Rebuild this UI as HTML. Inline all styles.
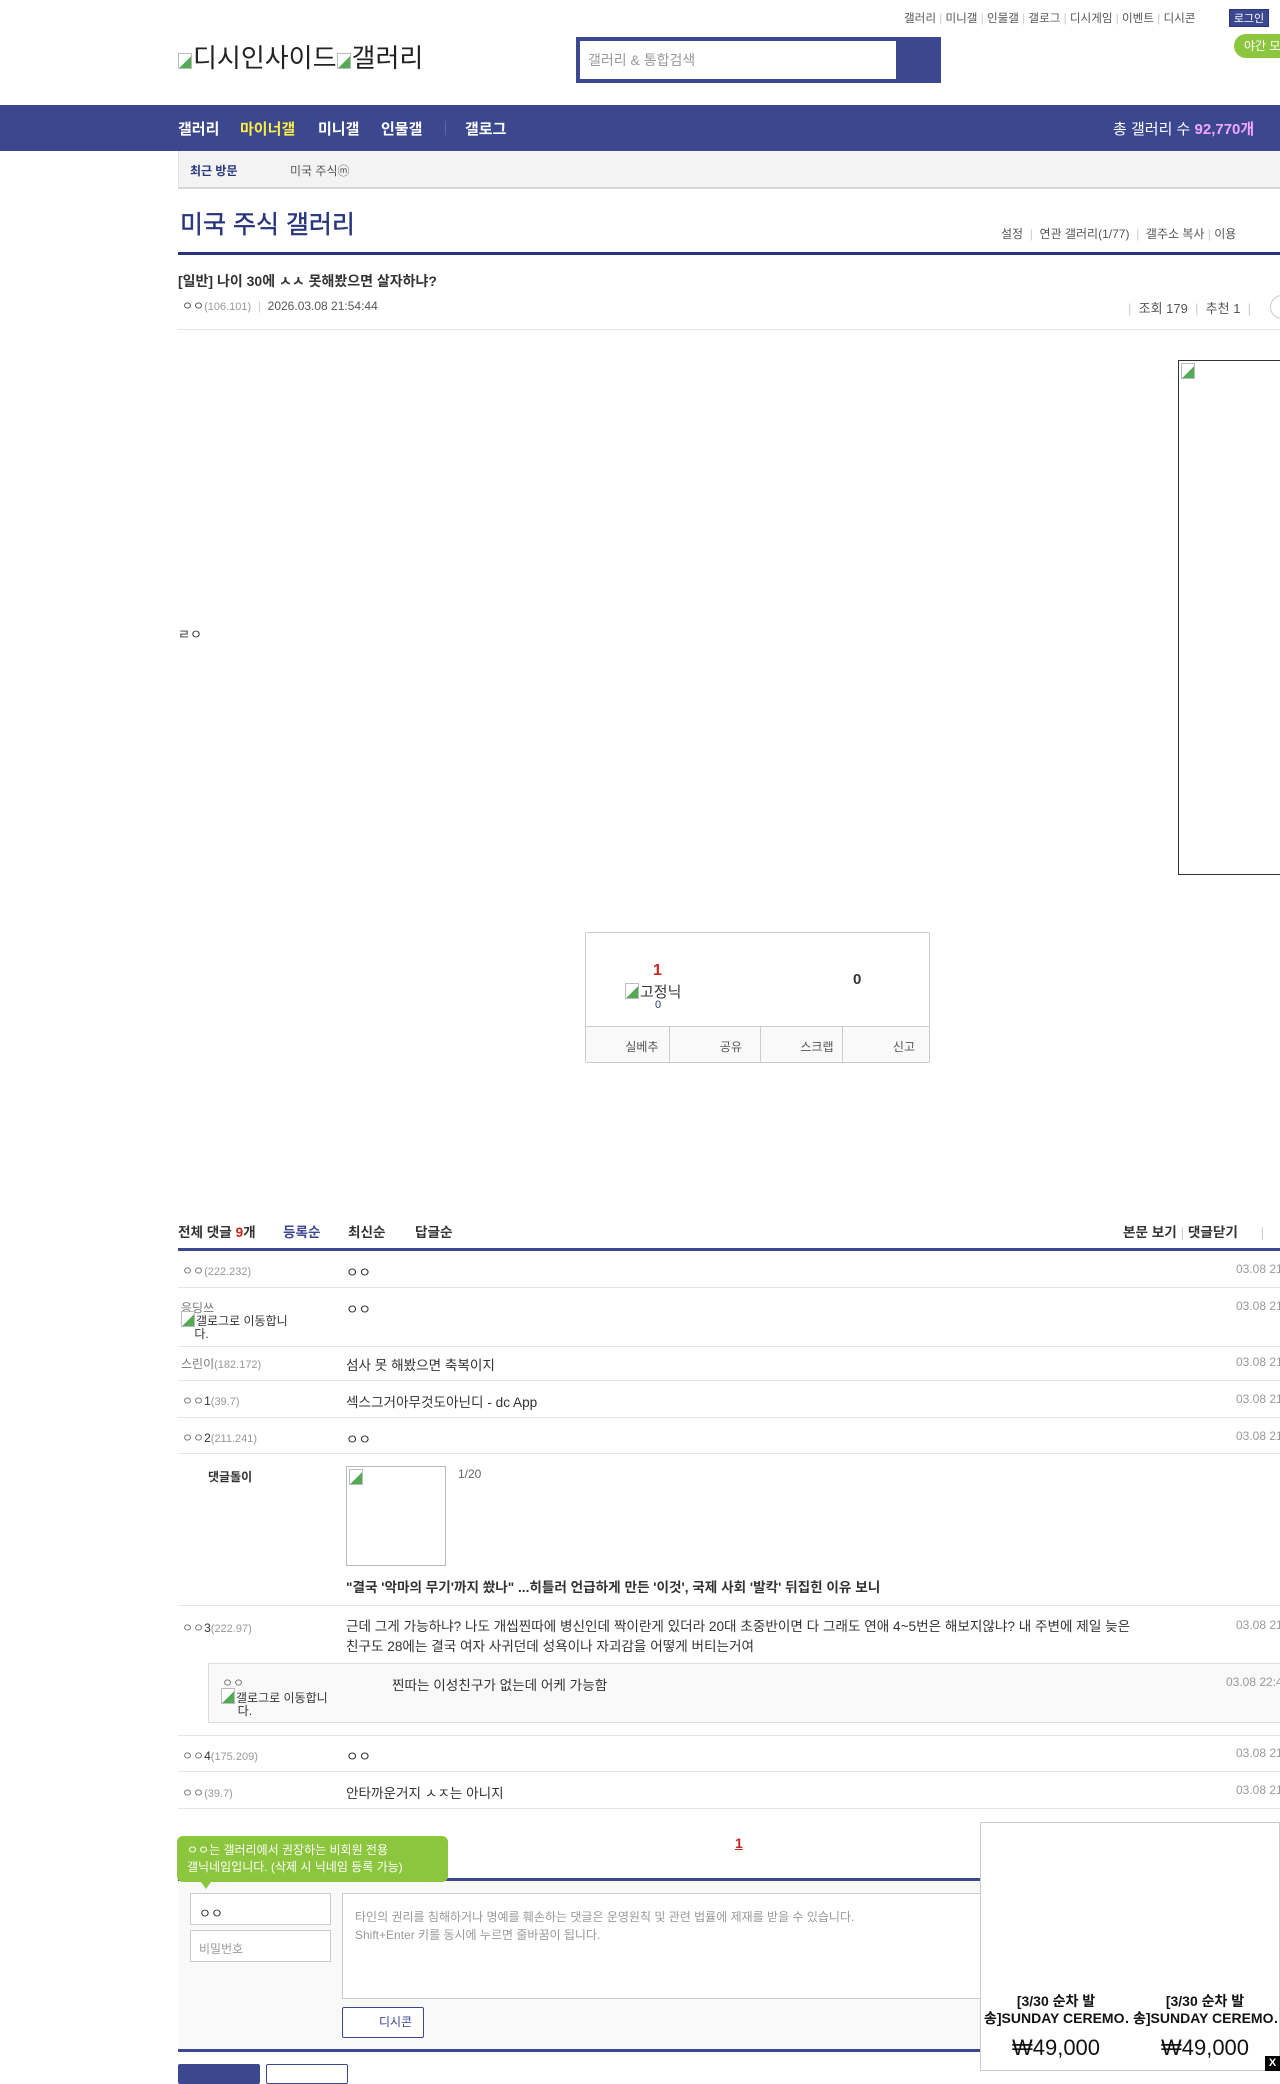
<!DOCTYPE html>
<html><head><meta charset="utf-8"><style>
*{margin:0;padding:0;box-sizing:border-box}
body{width:1280px;height:2071px;position:relative;overflow:hidden;background:#fff;font-family:"Liberation Sans","Noto Sans CJK KR",sans-serif;font-size:13px;color:#333}
.a{position:absolute;white-space:nowrap}
.line{position:absolute;height:1px;background:#e5e5e5;left:178px;right:0}
.nick{color:#777;font-size:12px}
.ip{color:#999;font-size:11px}
.dt{color:#999;font-size:12px;left:1236px}
.ct{font-size:13.6px}
.broken{display:inline-block;width:14px;height:16px;border:1px solid #bbb;background:linear-gradient(135deg,#fff 55%,#5a5 55%);vertical-align:-2px;margin-right:1px}
</style></head><body>
<div class="a" style="top:10px;left:904px;font-size:11.6px;color:#555">갤러리 <span style="color:#ccc">|</span> 미니갤 <span style="color:#ccc">|</span> 인물갤 <span style="color:#ccc">|</span> 갤로그 <span style="color:#ccc">|</span> 디시게임 <span style="color:#ccc">|</span> 이벤트 <span style="color:#ccc">|</span> 디시콘</div>
<div class="a" style="top:9px;left:1229px;width:40px;height:18px;background:#3b4890;color:#fff;font-size:11px;text-align:center;line-height:18px;border:1px solid #29367c">로그인</div>
<div class="a" style="top:34px;left:1234px;width:60px;height:24px;background:#8cc63e;border-radius:12px;color:#fff;font-size:12px;line-height:24px;padding-left:10px">야간 모드</div>
<div class="a" style="top:38px;left:178px;font-size:26px;color:#222"><span class="broken"></span>디시인사이드<span class="broken"></span>갤러리</div>
<div class="a" style="top:37px;left:576px;width:365px;height:46px;background:#3b4890"></div>
<div class="a" style="top:41px;left:580px;width:316px;height:38px;background:#fff;color:#999;font-size:14px;line-height:38px;padding-left:8px">갤러리 &amp; 통합검색</div>
<div class="a" style="top:105px;left:0;width:1280px;height:46px;background:#3b4890"></div>
<div class="a" style="top:118px;left:178px;color:#fff;font-size:15px;font-weight:bold">갤러리</div>
<div class="a" style="top:118px;left:240px;color:#ffed45;font-size:15px;font-weight:bold">마이너갤</div>
<div class="a" style="top:118px;left:318px;color:#fff;font-size:15px;font-weight:bold">미니갤</div>
<div class="a" style="top:118px;left:381px;color:#fff;font-size:15px;font-weight:bold">인물갤</div>
<div class="a" style="top:121px;left:445px;width:1px;height:14px;background:#5a66a6"></div>
<div class="a" style="top:118px;left:465px;color:#fff;font-size:15px;font-weight:bold">갤로그</div>
<div class="a" style="top:118px;left:1113px;color:#fff;font-size:15px">총 갤러리 수 <b style="color:#f4a6ff">92,770개</b></div>
<div class="a" style="top:151px;left:178px;width:1102px;height:38px;background:#f3f3f3;border-left:1px solid #ddd;border-bottom:2px solid #d6d6d6"></div>
<div class="a" style="top:162px;left:190px;font-size:12px;font-weight:bold;color:#29367c">최근 방문</div>
<div class="a" style="top:162px;left:290px;font-size:12px;color:#555">미국 주식ⓜ</div>
<div class="a" style="top:205px;left:180px;font-size:25px;color:#29367c;-webkit-text-stroke:0.4px #29367c">미국 주식 갤러리</div>
<div class="a" style="top:225px;left:1001px;font-size:12px;color:#555">설정 <span style="color:#ccc">&nbsp;|&nbsp;</span> 연관 갤러리(1/77) <span style="color:#ccc">&nbsp;|&nbsp;</span> 갤주소 복사 <span style="color:#ccc">|</span> 이용</div>
<div class="a" style="top:252px;left:178px;width:1102px;height:3px;background:#29367c"></div>
<div class="a" style="top:271px;left:178px;font-size:14px;font-weight:bold;color:#333">[일반] 나이 30에 ㅅㅅ 못해봤으면 살자하냐?</div>
<div class="a" style="top:297px;left:182px;font-size:12px;color:#555">ㅇㅇ<span class="ip">(106.101)</span> <span style="color:#ccc">&nbsp;|&nbsp;</span> 2026.03.08 21:54:44</div>
<div class="a" style="top:298px;left:1128px;font-size:13px;color:#555"><span style="color:#ccc">|</span>&nbsp; 조회 179 &nbsp;<span style="color:#ccc">|</span>&nbsp; 추천 1 &nbsp;<span style="color:#ccc">|</span></div>
<div class="a" style="top:295px;left:1270px;width:30px;height:24px;border:1px solid #ccc;border-radius:12px"></div>
<div class="line" style="top:329px"></div>
<div class="a" style="top:360px;left:1178px;width:110px;height:515px;border:1px solid #333"><span class="broken" style="margin:2px"></span></div>
<div class="a" style="top:624px;left:178px;font-size:13px">ㄹㅇ</div>
<div class="a" style="top:932px;left:585px;width:345px;height:131px;border:1px solid #ccc;border-radius:2px"></div>
<div class="a" style="top:962px;left:653px;color:#c5281c;font-weight:bold;font-size:16px">1</div>
<div class="a" style="top:981px;left:625px;font-size:15px;color:#333"><span class="broken"></span>고정닉</div>
<div class="a" style="top:999px;left:655px;font-size:11px;color:#29367c">0</div>
<div class="a" style="top:971px;left:853px;font-size:15px;font-weight:bold;color:#333">0</div>
<div class="a" style="top:1026px;left:586px;width:343px;height:36px;background:#f9f9f9;border-top:1px solid #ccc;display:flex;font-size:12px;color:#555">
<div style="flex:1;border-right:1px solid #ccc;text-align:right;padding:11px 10px 0 0">실베추</div>
<div style="flex:1;border-right:1px solid #ccc;text-align:right;padding:11px 18px 0 0">공유</div>
<div style="flex:1;border-right:1px solid #ccc;text-align:right;padding:11px 8px 0 0">스크랩</div>
<div style="flex:1;text-align:right;padding:11px 14px 0 0">신고</div></div>
<div class="a" style="top:1221px;left:178px;font-size:13.6px;font-weight:bold;color:#333">전체 댓글 <span style="color:#c5281c">9</span>개</div>
<div class="a" style="top:1221px;left:283px;font-size:13.6px;font-weight:bold;color:#3b4890">등록순</div>
<div class="a" style="top:1221px;left:348px;font-size:13.6px;font-weight:bold;color:#333">최신순</div>
<div class="a" style="top:1221px;left:415px;font-size:13.6px;font-weight:bold;color:#333">답글순</div>
<div class="a" style="top:1221px;left:1123px;font-size:13.6px;font-weight:bold;color:#333">본문 보기 <span style="color:#ccc;font-weight:normal">|</span> 댓글닫기 &nbsp;&nbsp;&nbsp;&nbsp;&nbsp;<span style="color:#ccc;font-weight:normal">|</span></div>
<div class="a" style="top:1248px;left:178px;width:1102px;height:3px;background:#3b4890"></div>
<div class="a nick" style="top:1262px;left:182px">ㅇㅇ<span class="ip">(222.232)</span></div>
<div class="a ct" style="top:1261px;left:346px">ㅇㅇ</div><div class="a dt" style="top:1262px">03.08 21</div>
<div class="line" style="top:1287px"></div>
<div class="a nick" style="top:1299px;left:181px">응딩쓰</div>
<div class="a" style="top:1311px;left:181px;font-size:12px;color:#333;line-height:13px"><span class="broken"></span>갤로그로 이동합니<br>&nbsp;&nbsp;&nbsp;&nbsp;다.</div>
<div class="a ct" style="top:1298px;left:346px">ㅇㅇ</div><div class="a dt" style="top:1299px">03.08 21</div>
<div class="line" style="top:1346px"></div>
<div class="a nick" style="top:1355px;left:181px">스린이<span class="ip">(182.172)</span></div>
<div class="a ct" style="top:1354px;left:346px">섬사 못 해봤으면 축복이지</div><div class="a dt" style="top:1355px">03.08 21</div>
<div class="line" style="top:1380px"></div>
<div class="a nick" style="top:1392px;left:182px">ㅇㅇ<span style="color:#333">1</span><span class="ip">(39.7)</span></div>
<div class="a ct" style="top:1391px;left:346px">섹스그거아무것도아닌디 - dc App</div><div class="a dt" style="top:1392px">03.08 21</div>
<div class="line" style="top:1417px"></div>
<div class="a nick" style="top:1429px;left:182px">ㅇㅇ<span style="color:#333">2</span><span class="ip">(211.241)</span></div>
<div class="a ct" style="top:1428px;left:346px">ㅇㅇ</div><div class="a dt" style="top:1429px">03.08 21</div>
<div class="line" style="top:1453px"></div>
<div class="a" style="top:1468px;left:208px;font-size:12px;font-weight:bold">댓글돌이</div>
<div class="a" style="top:1466px;left:346px;height:100px;border:1px solid #bbb;width:100px"><span class="broken" style="margin:2px"></span></div>
<div class="a" style="top:1467px;left:458px;font-size:12px;color:#666">1/20</div>
<div class="a" style="top:1576px;left:346px;font-size:13.6px;font-weight:bold">"결국 '악마의 무기'까지 쐈나" ...히틀러 언급하게 만든 '이것', 국제 사회 '발칵' 뒤집힌 이유 보니</div>
<div class="line" style="top:1605px"></div>
<div class="a nick" style="top:1619px;left:182px">ㅇㅇ<span style="color:#333">3</span><span class="ip">(222.97)</span></div>
<div class="a ct" style="top:1617px;left:346px;line-height:20px">근데 그게 가능하냐? 나도 개씹찐따에 병신인데 짝이란게 있더라 20대 초중반이면 다 그래도 연애 4~5번은 해보지않냐? 내 주변에 제일 늦은<br>친구도 28에는 결국 여자 사귀던데 성욕이나 자괴감을 어떻게 버티는거여</div>
<div class="a dt" style="top:1618px">03.08 21</div>
<div class="a" style="top:1663px;left:208px;width:1080px;height:60px;background:#f9f9f9;border:1px solid #ddd"></div>
<div class="a nick" style="top:1674px;left:222px">ㅇㅇ</div>
<div class="a" style="top:1688px;left:221px;font-size:12px;line-height:13px"><span class="broken"></span>갤로그로 이동합니<br>&nbsp;&nbsp;&nbsp;&nbsp;&nbsp;다.</div>
<div class="a ct" style="top:1674px;left:392px">찐따는 이성친구가 없는데 어케 가능함</div>
<div class="a dt" style="top:1675px;left:1226px">03.08 22:4</div>
<div class="line" style="top:1735px"></div>
<div class="a nick" style="top:1747px;left:182px">ㅇㅇ<span style="color:#333">4</span><span class="ip">(175.209)</span></div>
<div class="a ct" style="top:1745px;left:346px">ㅇㅇ</div><div class="a dt" style="top:1746px">03.08 21</div>
<div class="line" style="top:1771px"></div>
<div class="a nick" style="top:1784px;left:182px">ㅇㅇ<span class="ip">(39.7)</span></div>
<div class="a ct" style="top:1782px;left:346px">안타까운거지 ㅅㅈ는 아니지</div><div class="a dt" style="top:1783px">03.08 21</div>
<div class="line" style="top:1808px"></div>
<div class="a" style="top:1835px;left:735px;color:#c5281c;font-weight:bold;font-size:14px;text-decoration:underline">1</div>
<div class="a" style="top:1878px;left:178px;width:1102px;height:3px;background:#3b4890"></div>
<div class="a" style="top:1881px;left:178px;width:1102px;height:168px;background:#f9f9f9"></div>
<div class="a" style="top:1836px;left:177px;width:271px;height:46px;background:#8cc63e;border-radius:6px;color:#fff;font-size:12px;line-height:17px;padding:6px 10px">ㅇㅇ는 갤러리에서 권장하는 비회원 전용<br>갤닉네임입니다. (삭제 시 닉네임 등록 가능)</div>
<div class="a" style="top:1882px;left:201px;width:0;height:0;border-left:5px solid transparent;border-right:5px solid transparent;border-top:7px solid #8cc63e"></div>
<div class="a" style="top:1893px;left:190px;width:141px;height:32px;background:#fff;border:1px solid #ccc;padding:9px 8px;font-size:13px">ㅇㅇ</div>
<div class="a" style="top:1930px;left:190px;width:141px;height:32px;background:#fff;border:1px solid #ccc;padding:9px 8px;font-size:12px;color:#999">비밀번호</div>
<div class="a" style="top:1893px;left:342px;width:950px;height:106px;background:#fff;border:1px solid #ccc;padding:14px 12px;font-size:12px;color:#999;line-height:18px">타인의 권리를 침해하거나 명예를 훼손하는 댓글은 운영원칙 및 관련 법률에 제재를 받을 수 있습니다.<br>Shift+Enter 키를 동시에 누르면 줄바꿈이 됩니다.</div>
<div class="a" style="top:2007px;left:342px;width:82px;height:31px;background:#fff;border:1px solid #3b4890;border-radius:2px;font-size:12px;color:#3b4890;line-height:29px;padding-left:36px">디시콘</div>
<div class="a" style="top:2049px;left:178px;width:1102px;height:3px;background:#3b4890"></div>
<div class="a" style="top:2064px;left:178px;width:82px;height:20px;background:#3b4890;border-radius:2px"></div>
<div class="a" style="top:2064px;left:266px;width:82px;height:20px;border:1px solid #3b4890;border-radius:2px"></div>
<div class="a" style="top:1822px;left:980px;width:300px;height:249px;background:#fff;border:1px solid #ccc"></div>
<div class="a" style="top:1993px;left:984px;width:144px;text-align:center;font-size:14px;font-weight:bold;color:#111;line-height:17px;overflow:hidden">[3/30 순차 발<br>송]SUNDAY CEREMO…</div>
<div class="a" style="top:1993px;left:1133px;width:144px;text-align:center;font-size:14px;font-weight:bold;color:#111;line-height:17px;overflow:hidden">[3/30 순차 발<br>송]SUNDAY CEREMO…</div>
<div class="a" style="top:2035px;left:986px;width:140px;text-align:center;font-size:22px;color:#111">₩49,000</div>
<div class="a" style="top:2035px;left:1135px;width:140px;text-align:center;font-size:22px;color:#111">₩49,000</div>
<div class="a" style="top:2056px;left:1265px;width:15px;height:15px;background:#000;color:#fff;font-size:11px;font-weight:bold;text-align:center;line-height:15px">X</div>
</body></html>
